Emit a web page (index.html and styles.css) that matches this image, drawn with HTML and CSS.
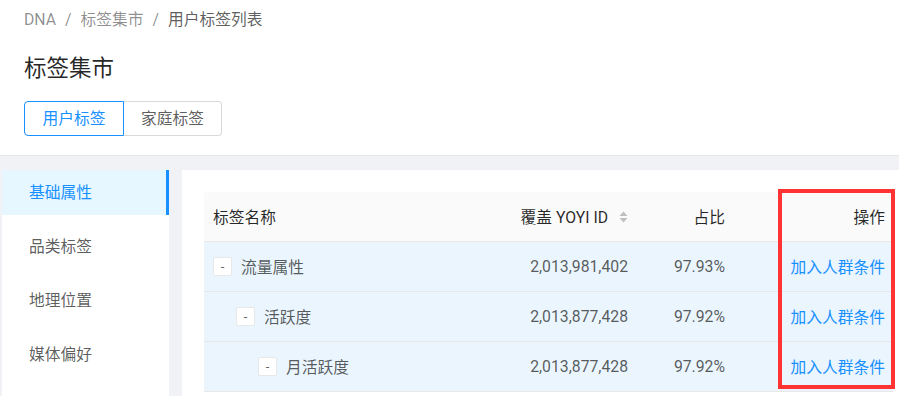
FILE: index.html
```html
<!DOCTYPE html>
<html lang="zh-CN">
<head>
<meta charset="utf-8">
<title>标签集市</title>
<link rel="stylesheet" href="styles.css">
</head>
<body>
<div class="page-header">
  <div class="breadcrumb">
    <span class="crumb">DNA</span><span class="sep">/</span><span class="crumb">标签集市</span><span class="sep">/</span><span class="crumb current">用户标签列表</span>
  </div>
  <h1 class="title">标签集市</h1>
  <div class="tabs">
    <span class="tab active">用户标签</span><span class="tab">家庭标签</span>
  </div>
</div>
<div class="main">
  <ul class="sidebar">
    <li class="menu-item active">基础属性</li>
    <li class="menu-item">品类标签</li>
    <li class="menu-item">地理位置</li>
    <li class="menu-item">媒体偏好</li>
  </ul>
  <div class="content">
    <div class="table">
      <div class="row head">
        <div class="cell name">标签名称</div>
        <div class="cell num">覆盖 YOYI ID<svg class="sorter" width="9" height="12" viewBox="0 0 9 12"><path d="M4.5 0.5 L8.5 5 L0.5 5 Z" fill="#bfbfbf"/><path d="M4.5 11.5 L8.5 7 L0.5 7 Z" fill="#bfbfbf"/></svg></div>
        <div class="cell num">占比</div>
        <div class="cell num">操作</div>
      </div>
      <div class="row">
        <div class="cell name lvl0"><span class="toggle">-</span>流量属性</div>
        <div class="cell num">2,013,981,402</div>
        <div class="cell num">97.93%</div>
        <div class="cell num"><a class="link">加入人群条件</a></div>
      </div>
      <div class="row">
        <div class="cell name lvl1"><span class="toggle">-</span>活跃度</div>
        <div class="cell num">2,013,877,428</div>
        <div class="cell num">97.92%</div>
        <div class="cell num"><a class="link">加入人群条件</a></div>
      </div>
      <div class="row">
        <div class="cell name lvl2"><span class="toggle">-</span>月活跃度</div>
        <div class="cell num">2,013,877,428</div>
        <div class="cell num">97.92%</div>
        <div class="cell num"><a class="link">加入人群条件</a></div>
      </div>
    </div>
    <div class="highlight"></div>
  </div>
</div>
</body>
</html>
```
FILE: styles.css
```css
* { box-sizing: border-box; }
html, body { margin: 0; padding: 0; }
body {
  width: 899px;
  height: 396px;
  overflow: hidden;
  background: #fff;
  font-family: Roboto, "Noto Sans CJK SC", sans-serif;
  font-size: 15.75px;
  color: rgba(0, 0, 0, 0.65);
}
.page-header {
  padding: 9px 24px 19px;
  border-bottom: 1px solid #e8e8e8;
  height: 156px;
}
.breadcrumb {
  line-height: 22px;
  height: 22px;
  color: rgba(0, 0, 0, 0.45);
}
.sep { margin: 0 9px; }
.crumb.current { color: rgba(0, 0, 0, 0.65); }
.title {
  margin: 21px 0 0;
  font-size: 22.5px;
  font-weight: 400;
  line-height: 32px;
  color: rgba(0, 0, 0, 0.85);
}
.tabs {
  margin-top: 17px;
  display: flex;
}
.tab {
  height: 35px;
  line-height: 33px;
  padding: 0 17.5px;
  border: 1px solid #d9d9d9;
  color: rgba(0, 0, 0, 0.65);
  background: #fff;
}
.tab:first-child { border-radius: 4px 0 0 4px; }
.tab:last-child { border-radius: 0 4px 4px 0; border-left: 0; padding: 0 17px; }
.tab.active {
  border-color: #1890ff;
  color: #1890ff;
}
.main {
  background: #f0f2f5;
  padding: 14px 0 0 2px;
  display: flex;
  gap: 13px;
  height: 240px;
}
.sidebar {
  list-style: none;
  margin: 0;
  padding: 0;
  width: 167px;
  background: #fff;
  flex: none;
}
.menu-item {
  height: 45px;
  line-height: 45px;
  padding-left: 27px;
  margin-bottom: 9px;
  color: rgba(0, 0, 0, 0.65);
}
.menu-item.active {
  background: #e6f7ff;
  color: #1890ff;
  border-right: 3px solid #1890ff;
}
.content {
  position: relative;
  flex: 1;
  background: #fff;
  padding: 22px 6px 0 22px;
}
.row {
  display: grid;
  grid-template-columns: 1fr 150px 97px 160px;
  height: 50px;
  border-bottom: 1px solid #e8e8e8;
  background: #eaf5fd;
}
.row.head {
  background: #fafafa;
  color: rgba(0, 0, 0, 0.85);
  border-radius: 4px 0 0 0;
}
.cell {
  display: flex;
  align-items: center;
  padding: 0 8px;
  white-space: nowrap;
}
.cell.name { padding-left: 9px; }
.cell.num { justify-content: flex-end; }
.cell.lvl1 { padding-left: 32px; }
.cell.lvl2 { padding-left: 54px; }
.sorter { margin-left: 11px; }
.toggle {
  display: inline-flex;
  align-items: center;
  justify-content: center;
  width: 19px;
  height: 19px;
  margin-right: 9px;
  border: 1px solid #e8e8e8;
  border-radius: 2px;
  background: #fff;
  font-size: 13px;
  line-height: 1;
  color: rgba(0, 0, 0, 0.65);
}
.link {
  color: #1890ff;
  cursor: pointer;
}
.highlight {
  position: absolute;
  left: 596px;
  top: 19px;
  width: 117px;
  height: 200px;
  border: 4px solid #ff3333;
  pointer-events: none;
}
```
